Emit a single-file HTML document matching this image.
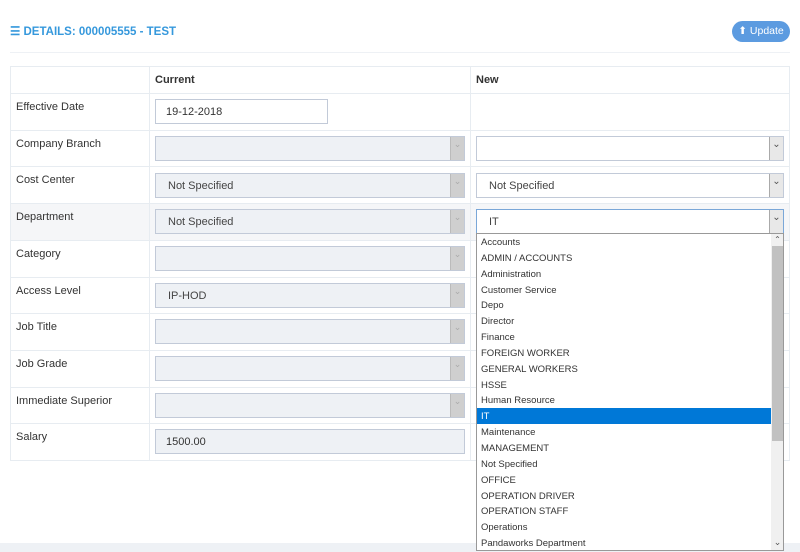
<!DOCTYPE html><html><head><style>
*{box-sizing:border-box;margin:0;padding:0}
body{width:800px;height:552px;background:#fff;font-family:"Liberation Sans",sans-serif;font-size:11px;color:#333;position:relative;overflow:hidden}
.a{position:absolute}
.t{position:absolute;left:16px;font-size:11px;color:#333}
.hl{position:absolute;left:10px;width:780px;height:1px;background:#e7ecf1}
.vl{position:absolute;width:1px;background:#e7ecf1}
.dis{position:absolute;left:155px;width:310px;height:25px;background:#eef1f5;border:1px solid #c2cad8;padding-left:12px;line-height:25px;font-size:11px;color:#444}
.dis:after{content:"⌄";position:absolute;right:0;top:0;width:13px;height:23px;background:#cfcfcf;border-left:1px solid #bbb;font-size:9px;line-height:14px;text-align:center;color:#aaa}
.sel{position:absolute;left:476px;width:308px;height:25px;background:#fff;border:1px solid #c2cad8;padding-left:12px;line-height:25px;color:#444}
.sel:after{content:"⌄";position:absolute;right:0;top:0;width:13px;height:23px;background:#e8e8e8;border-left:1px solid #aaa;font-size:10px;line-height:16px;text-align:center;color:#555}
.dd{position:absolute;left:476px;top:233px;width:308px;height:318px;background:#fff;border:1px solid #999;overflow:hidden}
.dd div{height:15.85px;line-height:17px;padding-left:4px;font-size:9.5px;color:#333;width:294px}
.dd .s{background:#0078d7;color:#fff}
</style></head><body>
<div class="a" style="left:10px;top:24px;font-weight:bold;font-size:11.5px;color:#3598dc">☰ DETAILS: 000005555 - TEST</div>
<div class="a" style="left:732px;top:21px;width:58px;height:21px;border-radius:11px;background:#5c9be0;color:#fff;font-size:10.5px;line-height:21px;text-align:center">⬆ Update</div>
<div class="a" style="left:10px;top:52px;width:780px;height:1px;background:#eef1f5"></div>
<div class="a" style="left:10px;top:203px;width:780px;height:37px;background:#f5f6f8"></div>
<div class="hl" style="top:66px"></div><div class="hl" style="top:93px"></div><div class="hl" style="top:130px"></div><div class="hl" style="top:166px"></div><div class="hl" style="top:203px"></div><div class="hl" style="top:240px"></div><div class="hl" style="top:277px"></div><div class="hl" style="top:313px"></div><div class="hl" style="top:350px"></div><div class="hl" style="top:387px"></div><div class="hl" style="top:423px"></div><div class="hl" style="top:460px"></div>
<div class="vl" style="left:10px;top:66px;height:394px"></div><div class="vl" style="left:149px;top:66px;height:394px"></div><div class="vl" style="left:470px;top:66px;height:394px"></div><div class="vl" style="left:789px;top:66px;height:394px"></div>
<div class="a" style="left:155px;top:74px;font-weight:bold">Current</div>
<div class="a" style="left:476px;top:74px;font-weight:bold">New</div>
<div class="t" style="top:101px">Effective Date</div>
<div class="t" style="top:138px">Company Branch</div>
<div class="t" style="top:174px">Cost Center</div>
<div class="t" style="top:211px">Department</div>
<div class="t" style="top:248px">Category</div>
<div class="t" style="top:285px">Access Level</div>
<div class="t" style="top:321px">Job Title</div>
<div class="t" style="top:358px">Job Grade</div>
<div class="t" style="top:395px">Immediate Superior</div>
<div class="t" style="top:431px">Salary</div>
<div class="a" style="left:155px;top:99px;width:173px;height:25px;border:1px solid #c2cad8;padding-left:10px;line-height:25px">19-12-2018</div>
<div class="dis" style="top:136px"></div>
<div class="dis" style="top:173px">Not Specified</div>
<div class="dis" style="top:209px">Not Specified</div>
<div class="dis" style="top:246px"></div>
<div class="dis" style="top:283px">IP-HOD</div>
<div class="dis" style="top:319px"></div>
<div class="dis" style="top:356px"></div>
<div class="dis" style="top:393px"></div>
<div class="a" style="left:155px;top:429px;width:310px;height:25px;background:#eef1f5;border:1px solid #c2cad8;padding-left:10px;line-height:25px">1500.00</div>
<div class="sel" style="top:136px"></div>
<div class="sel" style="top:173px">Not Specified</div>
<div class="sel" style="top:209px;border-color:#7aa7d8">IT</div>
<div class="a" style="left:0;top:543px;width:800px;height:9px;background:#eef1f5"></div>
<div class="dd">
<div>Accounts</div><div>ADMIN / ACCOUNTS</div><div>Administration</div><div>Customer Service</div><div>Depo</div><div>Director</div><div>Finance</div><div>FOREIGN WORKER</div><div>GENERAL WORKERS</div><div>HSSE</div><div>Human Resource</div><div class="s">IT</div><div>Maintenance</div><div>MANAGEMENT</div><div>Not Specified</div><div>OFFICE</div><div>OPERATION DRIVER</div><div>OPERATION STAFF</div><div>Operations</div><div>Pandaworks Department</div>
<span class="a" style="left:294px;top:0;width:13px;height:318px;background:#f0f0f0"></span>
<span class="a" style="left:295px;top:12px;width:11px;height:195px;background:#c1c1c1"></span>
<span class="a" style="left:294px;top:1px;width:13px;font-size:8px;text-align:center;color:#555">⌃</span>
<span class="a" style="left:294px;top:303px;width:13px;font-size:9px;text-align:center;color:#555">⌄</span>
</div>
</body></html>
